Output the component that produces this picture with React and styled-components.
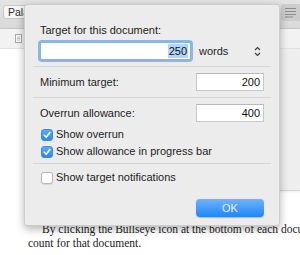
import React from "react";
import styled, { createGlobalStyle } from "styled-components";

const GlobalStyle = createGlobalStyle`
  html, body { margin: 0; padding: 0; overflow: hidden; }
  body { font-family: "Liberation Sans", Arial, sans-serif; background: #fff; }
`;

const Window = styled.div`
  position: relative;
  width: 300px;
  height: 255px;
  overflow: hidden;
  background: #fff;
  display: flex;
  flex-direction: column;
`;

const TopBar = styled.div`
  height: 29px;
  flex: none;
  box-sizing: border-box;
  border-bottom: 1px solid #c6c6c6;
  background: linear-gradient(#e4e4e4, #d9d9d9);
  display: flex;
  align-items: center;
  justify-content: space-between;
  padding: 0 0 0 3px;
`;

const FontButton = styled.div`
  height: 14px;
  width: 60px;
  box-sizing: border-box;
  margin-top: -4px;
  border: 1px solid #c9c9c9;
  border-radius: 3px;
  background: #f7f7f7;
  font-size: 10.5px;
  line-height: 12px;
  color: #333;
  padding-left: 4px;
`;

const MenuButton = styled.div`
  width: 22px;
  height: 17px;
  margin-right: -3px;
  margin-top: -4px;
  border-radius: 3px;
  background: #cdcdcd;
  display: flex;
  align-items: center;
  padding-left: 3px;
  box-sizing: border-box;
`;

const HeaderBand = styled.div`
  height: 20px;
  flex: none;
  box-sizing: border-box;
  background: #f2f2f2;
  border-bottom: 1px solid #e2e2e2;
  display: flex;
  align-items: center;
  padding-left: 15px;
`;

const UpperArea = styled.div`
  height: 141px;
  flex: none;
  display: flex;
  justify-content: flex-end;
`;

const SidePane = styled.div`
  width: 20px;
  height: 100%;
  background: #eeeeee;
  border-bottom: 1px solid #d4d4d4;
  box-shadow: 0 1px 2px rgba(0, 0, 0, 0.08);
`;

const Paragraph = styled.p`
  margin: 32px 0 0 28px;
  width: 460px;
  font-family: "Liberation Serif", "Times New Roman", serif;
  font-size: 11.5px;
  line-height: 14px;
  color: #1a1a1a;
  text-indent: 14px;
  white-space: nowrap;
`;

const Popover = styled.div`
  position: absolute;
  left: 24px;
  top: 4px;
  width: 256px;
  height: 222px;
  box-sizing: border-box;
  background: #ececec;
  border: 1px solid rgba(0, 0, 0, 0.13);
  border-radius: 4px;
  box-shadow: 0 3px 9px rgba(0, 0, 0, 0.3);
  padding: 0 8px;
  display: flex;
  flex-direction: column;
  font-size: 11px;
  color: #1d1d1d;
`;

const Section = styled.div`
  padding: ${(p) => p.$pad};
  display: flex;
  flex-direction: column;
`;

const Separator = styled.div`
  height: 1px;
  background: #d6d6d6;
  flex: none;
`;

const Label = styled.div`
  line-height: 13px;
  white-space: nowrap;
`;

const FieldRow = styled.div`
  margin-top: 5px;
  display: flex;
  align-items: center;
`;

const Field = styled.div`
  width: ${(p) => p.$w}px;
  height: 18px;
  box-sizing: border-box;
  background: #fff;
  border: 1px solid ${(p) => (p.$focus ? "#86b3e3" : "#c8c8c8")};
  border-top-color: ${(p) => (p.$focus ? "#86b3e3" : "#b9b9b9")};
  border-radius: ${(p) => (p.$focus ? "2px" : "0")};
  box-shadow: ${(p) =>
    p.$focus ? "0 0 0 2px rgba(110, 164, 228, 0.75)" : "none"};
  display: flex;
  align-items: center;
  justify-content: flex-end;
  padding-right: ${(p) => (p.$focus ? 2 : 3)}px;
  font-size: 11px;
  line-height: 14px;
  color: #111;
`;

const Selected = styled.span`
  background: #b4d4fc;
  padding: 0 1px;
`;

const Popup = styled.div`
  margin-left: 4px;
  width: 68px;
  height: 18px;
  display: flex;
  align-items: center;
  justify-content: space-between;
  padding: 0 2px 0 4px;
  box-sizing: border-box;
`;

const Row = styled.div`
  padding: ${(p) => p.$pad};
  display: flex;
  align-items: center;
  justify-content: space-between;
`;

const CheckRow = styled.div`
  height: 17px;
  display: flex;
  align-items: center;
  gap: 3px;
  padding-left: 8px;
`;

const Box = styled.div`
  width: 12px;
  height: 12px;
  box-sizing: border-box;
  border-radius: 3px;
  display: flex;
  align-items: center;
  justify-content: center;
  background: ${(p) =>
    p.$checked ? "linear-gradient(#5caafc, #2b86f4)" : "#fff"};
  border: 1px solid ${(p) => (p.$checked ? "#3a8ee8" : "#b8b8b8")};
  box-shadow: ${(p) => (p.$checked ? "none" : "0 0.5px 1px rgba(0,0,0,0.08)")};
`;

const ButtonRow = styled.div`
  margin-top: 13px;
  display: flex;
  justify-content: flex-end;
  padding-right: 7px;
`;

const OkButton = styled.div`
  width: 68px;
  height: 18px;
  border-radius: 4px;
  background: linear-gradient(#6db4fb, #1f86fa);
  box-shadow: 0 0.5px 1px rgba(0, 0, 0, 0.2);
  display: flex;
  align-items: center;
  justify-content: center;
  color: #e6f0fd;
  font-size: 11px;
  line-height: 13px;
`;

const Chevron = () => (
  <svg width="7" height="11" viewBox="0 0 7 11">
    <path
      d="M1 4 L3.5 1.5 L6 4 M1 7 L3.5 9.5 L6 7"
      stroke="#3a3a3a"
      strokeWidth="1.1"
      fill="none"
    />
  </svg>
);

const Check = () => (
  <svg width="10" height="10" viewBox="0 0 10 10">
    <path
      d="M2.2 5.2 L4.2 7.3 L7.9 2.6"
      stroke="#fff"
      strokeWidth="1.6"
      fill="none"
      strokeLinecap="round"
      strokeLinejoin="round"
    />
  </svg>
);

const DocIcon = () => (
  <svg width="7" height="9" viewBox="0 0 7 9">
    <rect x="0.5" y="0.5" width="6" height="8" fill="#fafafa" stroke="#a8a8a8" />
    <path d="M2 3 H5 M2 4.5 H5 M2 6 H5" stroke="#b8b8b8" strokeWidth="0.8" />
  </svg>
);

const LinesIcon = () => (
  <svg width="13" height="11" viewBox="0 0 13 11">
    <path
      d="M1 1.5 H12 M1 4.5 H12 M1 7.5 H12 M1 10 H9"
      stroke="#8a8a8a"
      strokeWidth="1"
    />
  </svg>
);

const Checkbox = ({ checked, children }) => (
  <CheckRow>
    <Box $checked={checked}>{checked && <Check />}</Box>
    <Label>{children}</Label>
  </CheckRow>
);

export default function App() {
  return (
    <>
      <GlobalStyle />
      <Window>
        <TopBar>
          <FontButton>Palatino</FontButton>
          <MenuButton>
            <LinesIcon />
          </MenuButton>
        </TopBar>
        <HeaderBand>
          <DocIcon />
        </HeaderBand>
        <UpperArea>
          <SidePane />
        </UpperArea>
        <Paragraph>
          By clicking the Bullseye icon at the bottom of each document, you can set a word
          <br />
          count for that document.
        </Paragraph>

        <Popover>
          <Section $pad="19px 7px 6px">
            <Label>Target for this document:</Label>
            <FieldRow>
              <Field $w={151} $focus>
                <Selected>250</Selected>
              </Field>
              <Popup>
                <span>words</span>
                <Chevron />
              </Popup>
            </FieldRow>
          </Section>
          <Separator />
          <Row $pad="6px 7px">
            <Label>Minimum target:</Label>
            <Field $w={68}>200</Field>
          </Row>
          <Separator />
          <Row $pad="6px 7px 4px">
            <Label>Overrun allowance:</Label>
            <Field $w={68}>400</Field>
          </Row>
          <Section $pad="0 0 3px">
            <Checkbox checked>Show overrun</Checkbox>
            <Checkbox checked>Show allowance in progress bar</Checkbox>
          </Section>
          <Separator />
          <Section $pad="5px 0 0">
            <Checkbox>Show target notifications</Checkbox>
          </Section>
          <ButtonRow>
            <OkButton>OK</OkButton>
          </ButtonRow>
        </Popover>
      </Window>
    </>
  );
}
